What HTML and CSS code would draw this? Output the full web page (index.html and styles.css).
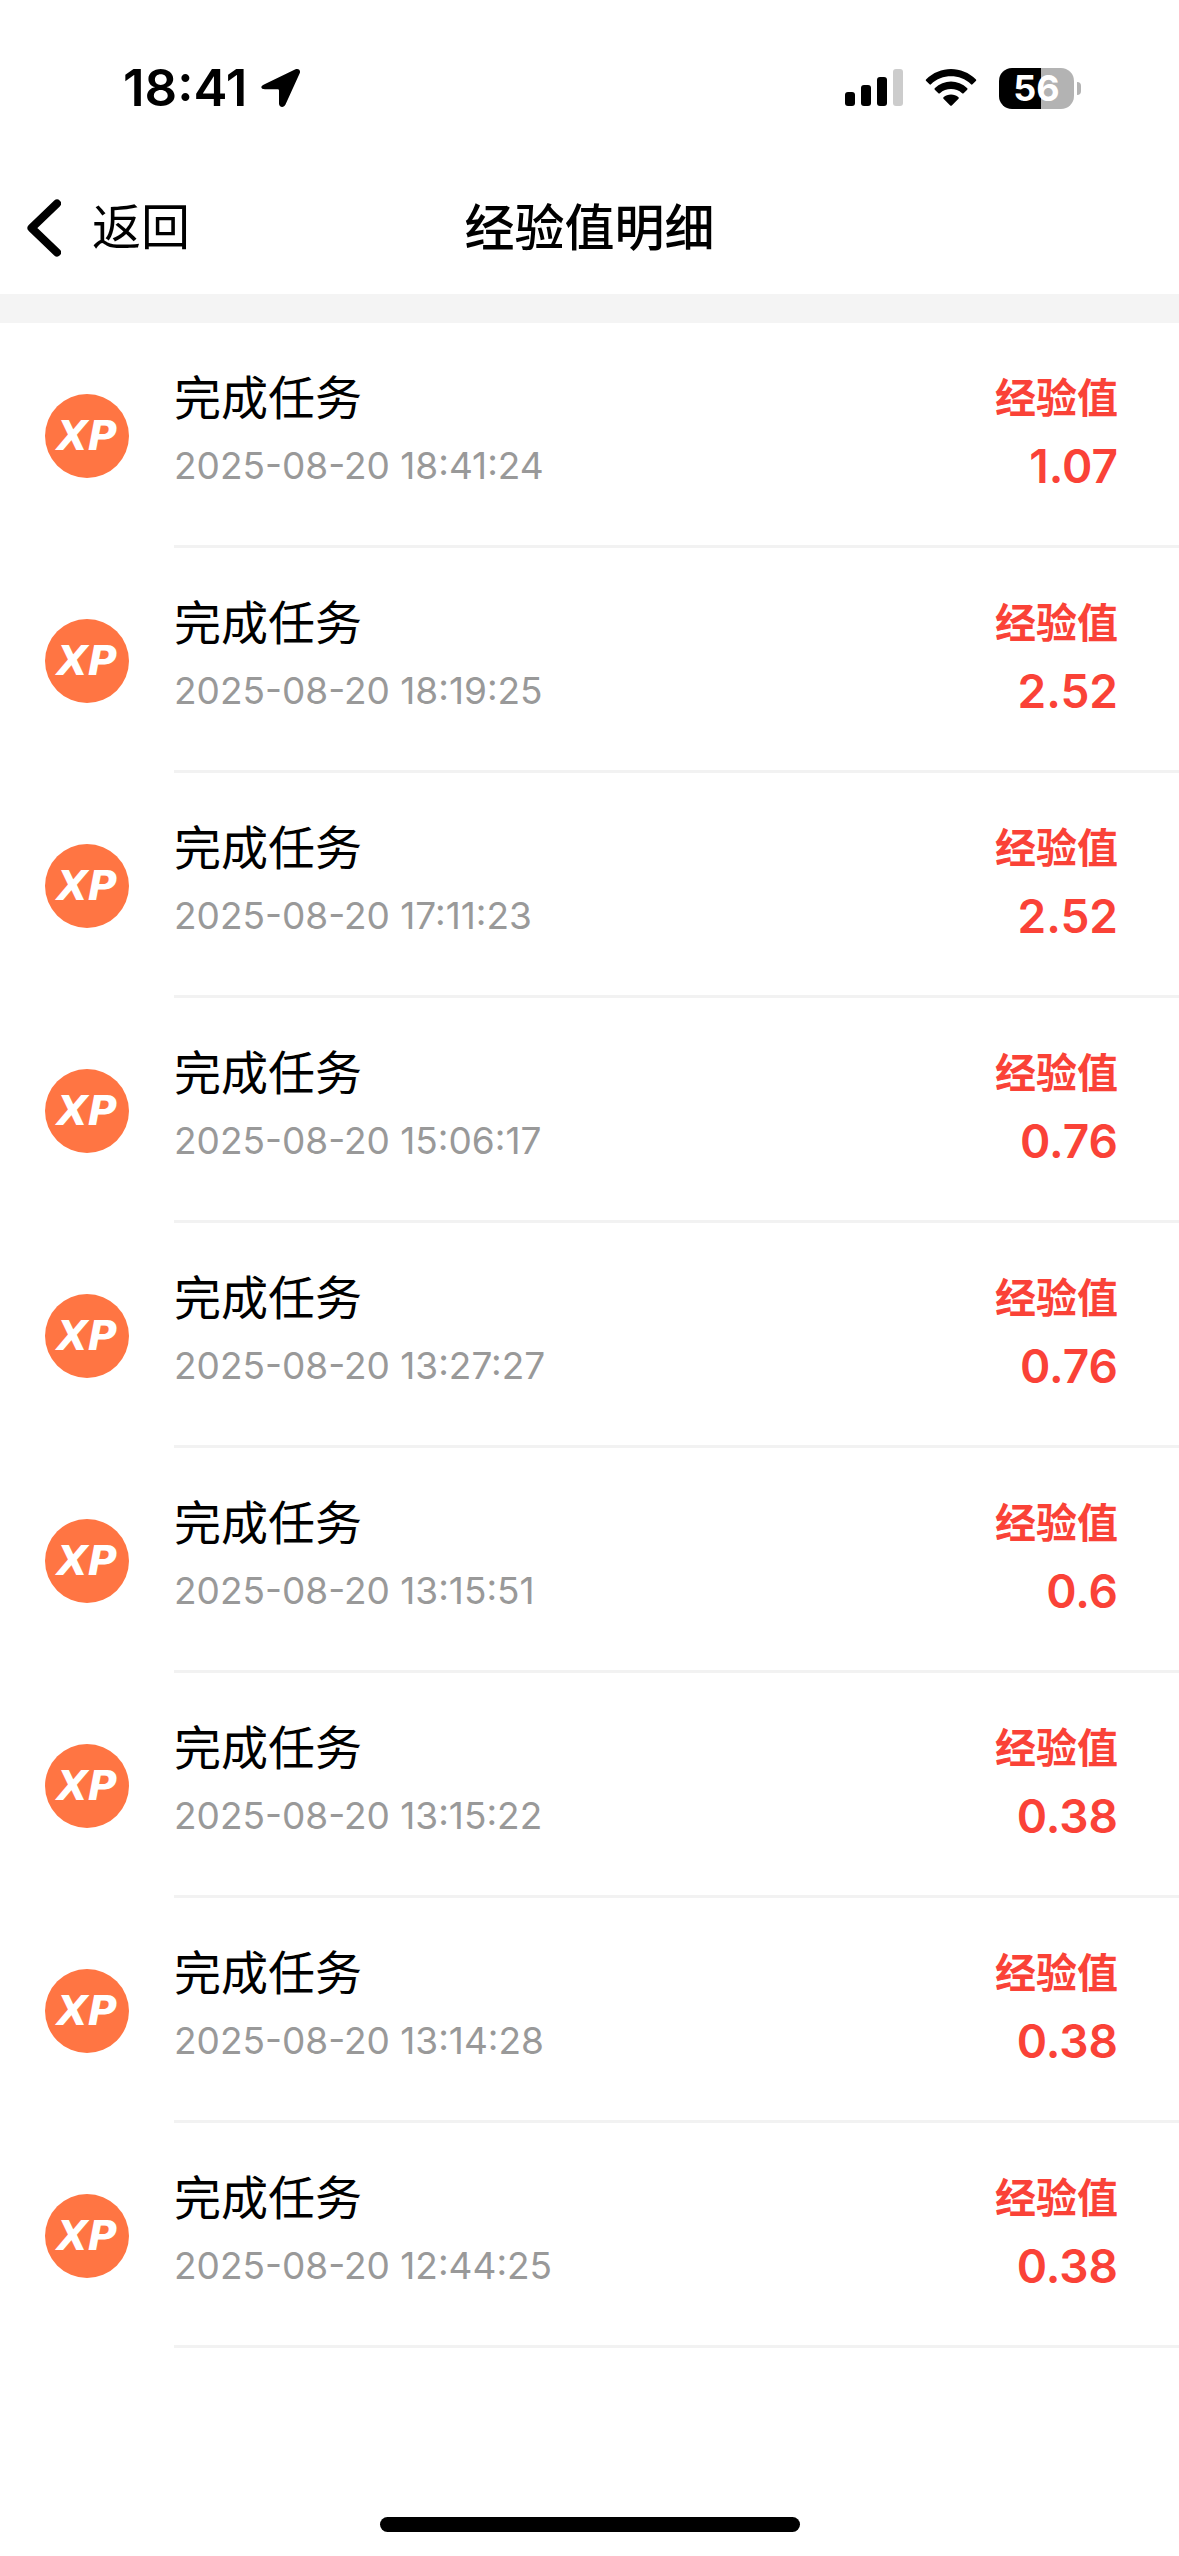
FILE: index.html
```html
<!DOCTYPE html>
<html lang="zh-CN">
<head>
<meta charset="utf-8">
<meta name="viewport" content="width=device-width, initial-scale=1">
<title>经验值明细</title>
<link rel="stylesheet" href="styles.css">
</head>
<body>
<div class="status">
  <div class="status-left">
    <span class="clock">18:41</span>
    <svg class="location" viewBox="0 0 40 40" aria-hidden="true"><path d="M3 16.500 34.500 1.300C37.500 0 40 2.300 38.700 5.300L24.500 36.500C22.900 40.300 18 39.500 18 35.500V22.500Q18 21.300 16.800 21.300H4C-.3 21.300-1 18.300 3 16.500Z"/></svg>
  </div>
  <div class="status-right">
    <svg class="signal" viewBox="0 0 58 38" aria-hidden="true"><rect y="23" width="10" height="14" rx="3"/><rect x="16" y="16" width="10" height="21" rx="3"/><rect x="32" y="8" width="10" height="29" rx="3"/><rect class="faint" x="48" width="10" height="37" rx="3"/></svg>
    <svg class="wifi" viewBox="0 0 52 38" aria-hidden="true"><path d="M1 10.500C15-3.500 37-3.500 51 10.500Q51.500 11.300 50.800 12L47.500 15.300Q46.700 16 46 15.300C35 4.700 17 4.700 6 15.300Q5.300 16 4.500 15.300L1.200 12Q.5 11.300 1 10.500Z"/><path d="M9.700 19.300C19 10.300 33 10.300 42.300 19.300Q42.800 20 42.200 20.800L38.600 24.300Q37.900 24.900 37.100 24.300C31 18.700 21 18.700 14.900 24.300Q14.100 24.900 13.400 24.300L9.800 20.800Q9.200 20 9.700 19.300Z"/><path d="M18.500 28.200C22.500 24.700 29.500 24.700 33.500 28.200Q34.200 29 33.500 29.700L26.800 36.400Q26 37.100 25.200 36.400L18.500 29.700Q17.800 29 18.500 28.200Z"/></svg>
    <div class="battery"><span class="battery-level">56</span><span class="battery-tip"></span></div>
  </div>
</div>

<header class="nav">
  <button class="back" type="button">
    <svg class="chevron" viewBox="0 0 34 58" aria-hidden="true"><path d="M30 4.500 4.500 29 30 53.500"/></svg>
    <span>返回</span>
  </button>
  <h1 class="title">经验值明细</h1>
</header>

<main class="records">
  <ul class="list">
    <li class="row"><span class="badge">XP</span><div class="content"><div class="info"><span class="name">完成任务</span><time class="date">2025-08-20 18:41:24</time></div><div class="points"><span class="label">经验值</span><span class="value">1.07</span></div></div></li>
    <li class="row"><span class="badge">XP</span><div class="content"><div class="info"><span class="name">完成任务</span><time class="date">2025-08-20 18:19:25</time></div><div class="points"><span class="label">经验值</span><span class="value">2.52</span></div></div></li>
    <li class="row"><span class="badge">XP</span><div class="content"><div class="info"><span class="name">完成任务</span><time class="date">2025-08-20 17:11:23</time></div><div class="points"><span class="label">经验值</span><span class="value">2.52</span></div></div></li>
    <li class="row"><span class="badge">XP</span><div class="content"><div class="info"><span class="name">完成任务</span><time class="date">2025-08-20 15:06:17</time></div><div class="points"><span class="label">经验值</span><span class="value">0.76</span></div></div></li>
    <li class="row"><span class="badge">XP</span><div class="content"><div class="info"><span class="name">完成任务</span><time class="date">2025-08-20 13:27:27</time></div><div class="points"><span class="label">经验值</span><span class="value">0.76</span></div></div></li>
    <li class="row"><span class="badge">XP</span><div class="content"><div class="info"><span class="name">完成任务</span><time class="date">2025-08-20 13:15:51</time></div><div class="points"><span class="label">经验值</span><span class="value">0.6</span></div></div></li>
    <li class="row"><span class="badge">XP</span><div class="content"><div class="info"><span class="name">完成任务</span><time class="date">2025-08-20 13:15:22</time></div><div class="points"><span class="label">经验值</span><span class="value">0.38</span></div></div></li>
    <li class="row"><span class="badge">XP</span><div class="content"><div class="info"><span class="name">完成任务</span><time class="date">2025-08-20 13:14:28</time></div><div class="points"><span class="label">经验值</span><span class="value">0.38</span></div></div></li>
    <li class="row"><span class="badge">XP</span><div class="content"><div class="info"><span class="name">完成任务</span><time class="date">2025-08-20 12:44:25</time></div><div class="points"><span class="label">经验值</span><span class="value">0.38</span></div></div></li>
  </ul>
</main>
<div class="home-indicator"></div>
</body>
</html>
```
FILE: styles.css
```css
* {
  box-sizing: border-box;
}

body {
  margin: 0;
  min-height: 100vh;
  display: flex;
  flex-direction: column;
  background: #fff;
  color: #000;
  font-family: Inter, "Noto Sans CJK SC", sans-serif;
}

svg {
  display: block;
}

/* Status bar */
.status {
  display: flex;
  justify-content: space-between;
  align-items: center;
  height: 162px;
  padding: 14px 98px 0 123px;
}

.status-left,
.status-right {
  display: flex;
  align-items: center;
}

.status-left {
  gap: 14px;
}

.status-right {
  gap: 22px;
}

.clock {
  font-size: 51px;
  font-weight: 600;
  line-height: 60px;
}

.location {
  width: 40px;
  height: 40px;
}

.signal {
  width: 58px;
  height: 38px;
}

.faint {
  fill: #ccc;
}

.wifi {
  width: 52px;
  height: 38px;
}

.battery {
  display: flex;
  align-items: center;
  gap: 3px;
}

.battery-level {
  width: 75px;
  border-radius: 13px;
  background: linear-gradient(to right, #000 56%, #b3b3b3 56%);
  color: #fff;
  font-size: 36px;
  font-weight: 700;
  line-height: 41px;
  text-align: center;
}

.battery-tip {
  width: 4px;
  height: 13px;
  border-radius: 0 4px 4px 0;
  background: #b3b3b3;
}

/* Navigation bar */
.nav {
  display: grid;
  grid-template-columns: 1fr auto 1fr;
  align-items: center;
  height: 132px;
  padding: 0 27px;
}

.back {
  display: flex;
  align-items: center;
  justify-self: start;
  gap: 31px;
  padding: 0;
  border: 0;
  background: none;
  color: inherit;
  font: inherit;
  font-size: 49px;
  line-height: 72px;
}

.chevron {
  width: 34px;
  height: 58px;
  fill: none;
  stroke: #000;
  stroke-width: 8;
  stroke-linecap: round;
  stroke-linejoin: round;
}

.title {
  margin: 0;
  font-size: 50px;
  font-weight: 500;
  line-height: 72px;
}

/* Record list */
.records {
  flex: 1;
  border-top: 29px solid #f4f4f4;
}

.list {
  margin: 0;
  padding: 0;
  list-style: none;
}

.row {
  display: flex;
  align-items: center;
  gap: 45px;
  padding-left: 45px;
}

.badge {
  flex: none;
  width: 84px;
  border-radius: 50%;
  background: #ff7543;
  color: #fff;
  font-family: "DejaVu Sans", sans-serif;
  font-size: 40px;
  font-style: italic;
  font-weight: 700;
  line-height: 84px;
  text-align: center;
}

.content {
  flex: 1;
  display: flex;
  justify-content: space-between;
  padding: 41px 61px 45px 0;
  border-bottom: 3px solid #f2f2f2;
}

.info,
.points {
  display: flex;
  flex-direction: column;
  line-height: 68px;
}

.points {
  align-items: flex-end;
  color: #fa4237;
}

.name {
  font-size: 47px;
}

.date {
  color: #999;
  font-size: 37px;
}

.label {
  font-size: 41px;
  font-weight: 600;
}

.value {
  font-size: 46px;
  font-weight: 600;
}

.home-indicator {
  align-self: center;
  width: 420px;
  height: 15px;
  margin-bottom: 24px;
  border-radius: 8px;
  background: #000;
}
```
